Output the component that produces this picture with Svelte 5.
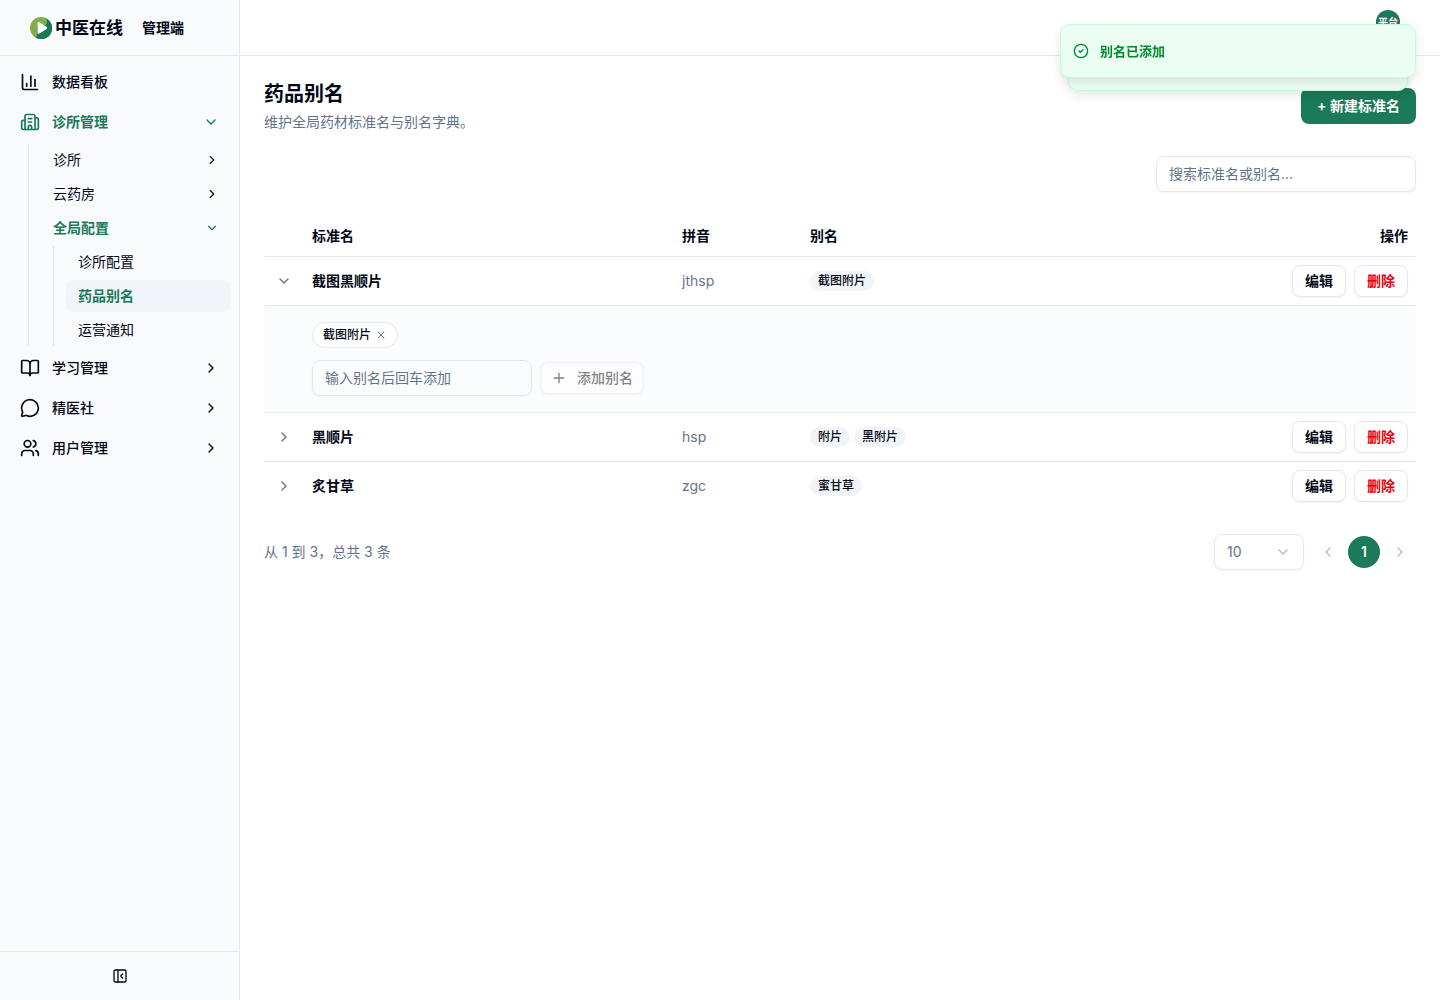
<script lang="ts">
  interface Herb {
    name: string;
    pinyin: string;
    aliases: string[];
  }

  let herbs: Herb[] = [
    { name: "截图黑顺片", pinyin: "jthsp", aliases: ["截图附片"] },
    { name: "黑顺片", pinyin: "hsp", aliases: ["附片", "黑附片"] },
    { name: "炙甘草", pinyin: "zgc", aliases: ["蜜甘草"] },
  ];

  const bottomNav = [
    { label: "学习管理", icon: "book" },
    { label: "精医社", icon: "chat" },
    { label: "用户管理", icon: "users" },
  ];

  const icons: Record<string, string[]> = {
    chart: ["M3 3v16a2 2 0 0 0 2 2h16", "M18 17V9", "M13 17V5", "M8 17v-3"],
    building: [
      "M10 12h4",
      "M10 8h4",
      "M14 21v-3a2 2 0 0 0-4 0v3",
      "M6 10H4a2 2 0 0 0-2 2v7a2 2 0 0 0 2 2h16a2 2 0 0 0 2-2V9a2 2 0 0 0-2-2h-2",
      "M6 21V5a2 2 0 0 1 2-2h8a2 2 0 0 1 2 2v16",
    ],
    book: [
      "M12 7v14",
      "M3 18a1 1 0 0 1-1-1V4a1 1 0 0 1 1-1h5a4 4 0 0 1 4 4 4 4 0 0 1 4-4h5a1 1 0 0 1 1 1v13a1 1 0 0 1-1 1h-6a3 3 0 0 0-3 3 3 3 0 0 0-3-3z",
    ],
    chat: [
      "M2.992 16.342a2 2 0 0 1 .094 1.167l-1.065 3.290a1 1 0 0 0 1.236 1.168l3.413-.998a2 2 0 0 1 1.099.092 10 10 0 1 0-4.777-4.719",
    ],
    users: [
      "M16 21v-2a4 4 0 0 0-4-4H6a4 4 0 0 0-4 4v2",
      "M13 7a4 4 0 1 1-8 0 4 4 0 0 1 8 0",
      "M22 21v-2a4 4 0 0 0-3-3.87",
      "M16 3.13a4 4 0 0 1 0 7.75",
    ],
    right: ["m9 18 6-6-6-6"],
    left: ["m15 18-6-6 6-6"],
    down: ["m6 9 6 6 6-6"],
    plus: ["M5 12h14", "M12 5v14"],
    close: ["M18 6 6 18", "m6 6 12 12"],
    panel: [
      "M5 3h14a2 2 0 0 1 2 2v14a2 2 0 0 1-2 2H5a2 2 0 0 1-2-2V5a2 2 0 0 1 2-2z",
      "M9 3v18",
      "m16 15-3-3 3-3",
    ],
    check: ["M22 12a10 10 0 1 1-20 0 10 10 0 0 1 20 0", "m9 12 2 2 4-4"],
  };

  let expanded = "截图黑顺片";
  let search = "";
  let newAlias = "";
  let pageSize = "10";

  const toggle = (name: string) => {
    expanded = expanded === name ? "" : name;
  };

  const addAlias = (herb: Herb) => {
    const value = newAlias.trim();
    if (!value) return;
    herb.aliases = [...herb.aliases, value];
    herbs = herbs;
    newAlias = "";
  };

  const removeAlias = (herb: Herb, alias: string) => {
    herb.aliases = herb.aliases.filter((a) => a !== alias);
    herbs = herbs;
  };

  $: visible = herbs.filter((h) => h.name.includes(search) || h.aliases.some((a) => a.includes(search)));
</script>

{#snippet icon(name: string, size: number, stroke = 2)}
  <svg
    width={size}
    height={size}
    viewBox="0 0 24 24"
    fill="none"
    stroke="currentColor"
    stroke-width={stroke}
    stroke-linecap="round"
    stroke-linejoin="round"
    aria-hidden="true">
    {#each icons[name] as d}
      <path {d} />
    {/each}
  </svg>
{/snippet}

<div class="app">
  <aside class="sidebar">
    <div class="brand">
      <svg class="logo" width="22" height="22" viewBox="0 0 22 22" aria-hidden="true">
        <circle cx="11" cy="11" r="11" fill="#83ad45" />
        <path d="M16 1.200A11 11 0 1 1 5.500 20.500C7 19.500 7 18 7 16V9l9-1c1-2 1.500-4.500 0-6.800z" fill="#1a7a57" />
        <path d="M7.500 6.200c0-1 .9-1.500 1.800-1l7.200 4.600c.8.5.8 1.600 0 2.100l-5.500 3.500c-1.500 1-2.500 1.300-3.500 1.300z" fill="#fff" />
      </svg>
      <span class="brand-name">中医在线</span>
      <span class="brand-role">管理端</span>
    </div>

    <nav class="nav">
      <button class="nav-item">
        {@render icon("chart", 20)}
        <span>数据看板</span>
      </button>
      <button class="nav-item current" aria-expanded="true">
        {@render icon("building", 20)}
        <span>诊所管理</span>
        {@render icon("down", 16)}
      </button>
      <div class="sub">
        <button class="sub-item"><span>诊所</span>{@render icon("right", 14)}</button>
        <button class="sub-item"><span>云药房</span>{@render icon("right", 14)}</button>
        <button class="sub-item current" aria-expanded="true">
          <span>全局配置</span>{@render icon("down", 14)}
        </button>
        <div class="sub nested">
          <a class="sub-item" href="#clinic">诊所配置</a>
          <a class="sub-item current selected" href="#alias" aria-current="page">药品别名</a>
          <a class="sub-item" href="#notice">运营通知</a>
        </div>
      </div>
      {#each bottomNav as item}
        <button class="nav-item">
          {@render icon(item.icon, 20)}
          <span>{item.label}</span>
          {@render icon("right", 16)}
        </button>
      {/each}
    </nav>

    <div class="sidebar-footer">
      <button class="collapse" aria-label="收起">{@render icon("panel", 16)}</button>
    </div>
  </aside>

  <div class="content">
    <header class="topbar">
      <button class="avatar">平台</button>
    </header>

    <main class="main">
      <div class="page-head">
        <div>
          <h1>药品别名</h1>
          <p>维护全局药材标准名与别名字典。</p>
        </div>
        <button class="primary">+ 新建标准名</button>
      </div>

      <div class="toolbar">
        <input
          class="field search"
          type="text"
          placeholder="搜索标准名或别名..."
          aria-label="搜索标准名或别名"
          bind:value={search} />
      </div>

      <table>
        <thead>
          <tr>
            <th class="col-toggle"></th>
            <th class="col-name">标准名</th>
            <th class="col-pinyin">拼音</th>
            <th>别名</th>
            <th class="col-actions">操作</th>
          </tr>
        </thead>
        <tbody>
          {#each visible as herb}
            <tr>
              <td>
                <button
                  class="toggle"
                  aria-label="展开"
                  aria-expanded={expanded === herb.name}
                  on:click={() => toggle(herb.name)}>
                  {@render icon(expanded === herb.name ? "down" : "right", 16)}
                </button>
              </td>
              <td class="name">{herb.name}</td>
              <td class="pinyin">{herb.pinyin}</td>
              <td>
                <div class="badges">
                  {#each herb.aliases as alias}
                    <span class="badge">{alias}</span>
                  {/each}
                </div>
              </td>
              <td>
                <div class="actions">
                  <button class="outline">编辑</button>
                  <button class="outline danger">删除</button>
                </div>
              </td>
            </tr>
            {#if expanded === herb.name}
              <tr class="detail">
                <td colspan="5">
                  <div class="chips">
                    {#each herb.aliases as alias}
                      <span class="chip">
                        {alias}
                        <button aria-label="移除" on:click={() => removeAlias(herb, alias)}>
                          {@render icon("close", 12)}
                        </button>
                      </span>
                    {/each}
                  </div>
                  <form class="add-form" on:submit|preventDefault={() => addAlias(herb)}>
                    <input
                      class="field alias"
                      type="text"
                      placeholder="输入别名后回车添加"
                      aria-label="输入别名"
                      bind:value={newAlias} />
                    <button class="outline add" disabled={!newAlias.trim()}>
                      {@render icon("plus", 16)}
                      添加别名
                    </button>
                  </form>
                </td>
              </tr>
            {/if}
          {/each}
        </tbody>
      </table>

      <div class="pagination">
        <span class="summary">从 1 到 3，总共 3 条</span>
        <div class="pager">
          <div class="select">
            <select class="field" aria-label="每页条数" bind:value={pageSize}>
              <option>10</option>
              <option>20</option>
              <option>50</option>
            </select>
            {@render icon("down", 16)}
          </div>
          <div class="pages">
            <button class="page" disabled aria-label="上一页">{@render icon("left", 16)}</button>
            <button class="page active" aria-current="page">1</button>
            <button class="page" disabled aria-label="下一页">{@render icon("right", 16)}</button>
          </div>
        </div>
      </div>
    </main>
  </div>

  <div class="toaster" role="status">
    <div class="toast behind"></div>
    <div class="toast">
      {@render icon("check", 16)}
      <span>别名已添加</span>
    </div>
  </div>
</div>

<style>
  :global(body) {
    margin: 0;
    background: #fff;
  }

  .app {
    --primary: #1b7a59;
    --text: #020817;
    --muted: #64748b;
    --border: #e2e8f0;
    display: flex;
    min-height: 100vh;
    font-family: Inter, "Noto Sans CJK SC", sans-serif;
    font-size: 14px;
    line-height: 20px;
    color: var(--text);
  }

  .app :global(*) {
    box-sizing: border-box;
  }

  button,
  input,
  select {
    font: inherit;
    color: inherit;
  }

  button {
    display: flex;
    align-items: center;
    padding: 0;
    border: 0;
    background: none;
    white-space: nowrap;
    cursor: pointer;
  }

  svg {
    flex-shrink: 0;
  }

  .sidebar {
    display: flex;
    flex-direction: column;
    flex-shrink: 0;
    width: 240px;
    background: #f8fafc;
    border-right: 1px solid var(--border);
  }

  .brand {
    display: flex;
    align-items: center;
    height: 56px;
    padding-left: 30px;
    border-bottom: 1px solid var(--border);
    font-weight: 600;
  }

  .brand-name {
    margin: 0 19px 0 3px;
    font-size: 17px;
  }

  .nav {
    display: flex;
    flex-direction: column;
    flex: 1;
    gap: 4px;
    padding: 8px;
  }

  .nav-item {
    gap: 12px;
    height: 36px;
    padding: 0 12px;
    border-radius: 8px;
    text-align: left;
    font-weight: 500;
  }

  .nav-item span,
  .sub-item span {
    flex: 1;
  }

  .sub {
    display: flex;
    flex-direction: column;
    gap: 2px;
    margin-left: 20px;
    padding-left: 12px;
    border-left: 1px solid var(--border);
  }

  .nested {
    margin-left: 12px;
  }

  .sub-item {
    display: flex;
    align-items: center;
    height: 32px;
    padding: 0 12px;
    border-radius: 8px;
    text-align: left;
    text-decoration: none;
    color: var(--text);
  }

  .current {
    color: var(--primary);
    font-weight: 600;
  }

  .selected {
    background: #f1f5f9;
  }

  .sidebar-footer {
    display: flex;
    justify-content: center;
    height: 49px;
    border-top: 1px solid var(--border);
  }

  .content {
    flex: 1;
    min-width: 0;
  }

  .topbar {
    display: flex;
    justify-content: flex-end;
    align-items: flex-start;
    height: 56px;
    padding: 10px 40px 0;
    border-bottom: 1px solid var(--border);
  }

  .avatar {
    justify-content: center;
    width: 24px;
    height: 24px;
    border-radius: 50%;
    background: var(--primary);
    color: #fff;
    font-size: 10px;
    font-weight: 600;
  }

  .main {
    display: flex;
    flex-direction: column;
    gap: 24px;
    padding: 24px;
  }

  .page-head {
    display: flex;
    justify-content: space-between;
    align-items: center;
  }

  h1 {
    margin: 0 0 4px;
    font-size: 20px;
    line-height: 28px;
    font-weight: 600;
  }

  p {
    margin: 0;
    color: var(--muted);
  }

  .primary {
    height: 36px;
    padding: 0 16px;
    border-radius: 8px;
    background: var(--primary);
    color: #fff;
    font-weight: 600;
  }

  .toolbar {
    display: flex;
    justify-content: flex-end;
  }

  .field {
    height: 36px;
    padding: 0 12px 2px;
    border: 1px solid var(--border);
    border-radius: 8px;
    background: transparent;
    box-shadow: 0 1px 2px rgba(0, 0, 0, 0.05);
  }

  .field::placeholder {
    color: var(--muted);
    opacity: 1;
  }

  .search {
    width: 260px;
  }

  table {
    width: 100%;
    border-collapse: separate;
    border-spacing: 0;
    table-layout: fixed;
  }

  th {
    height: 41px;
    padding: 0 8px;
    border-bottom: 1px solid var(--border);
    text-align: left;
    font-weight: 600;
  }

  td {
    padding: 8px;
    border-bottom: 1px solid var(--border);
  }

  tbody tr:last-child td {
    border-bottom: 0;
  }

  .col-toggle {
    width: 40px;
  }

  .col-name {
    width: 370px;
  }

  .col-pinyin {
    width: 128px;
  }

  .col-actions {
    width: 160px;
    text-align: right;
  }

  .toggle {
    justify-content: center;
    width: 24px;
    height: 24px;
    color: var(--muted);
  }

  .name {
    font-weight: 600;
  }

  .pinyin {
    color: var(--muted);
  }

  .badges,
  .chips {
    display: flex;
    flex-wrap: wrap;
    gap: 4px;
  }

  .badge {
    padding: 2px 8px;
    border-radius: 10px;
    background: #f1f5f9;
    font-size: 12px;
    line-height: 16px;
    font-weight: 500;
  }

  .actions {
    display: flex;
    justify-content: flex-end;
    gap: 8px;
  }

  .outline {
    height: 32px;
    padding: 0 12px;
    border: 1px solid var(--border);
    border-radius: 8px;
    background: #fff;
    box-shadow: 0 1px 2px rgba(0, 0, 0, 0.05);
    font-weight: 600;
  }

  .danger {
    color: #e7000b;
  }

  .detail td {
    padding: 16px 48px;
    background: #fbfcfd;
  }

  .chip {
    display: flex;
    align-items: center;
    gap: 4px;
    height: 26px;
    padding: 0 10px;
    border: 1px solid var(--border);
    border-radius: 13px;
    background: #fff;
    font-size: 12px;
    font-weight: 500;
  }

  .chip button {
    color: var(--muted);
  }

  .add-form {
    display: flex;
    align-items: center;
    gap: 8px;
    margin-top: 12px;
  }

  .alias {
    width: 220px;
  }

  .add {
    gap: 10px;
    padding: 0 10px;
    font-weight: 500;
  }

  .add:disabled {
    opacity: 0.5;
  }

  .pagination,
  .pager,
  .pages {
    display: flex;
    align-items: center;
  }

  .pagination {
    justify-content: space-between;
    color: var(--muted);
  }

  .pager {
    gap: 8px;
  }

  .pages {
    gap: 4px;
  }

  .select {
    display: grid;
    align-items: center;
    width: 90px;
  }

  .select > :global(*) {
    grid-area: 1 / 1;
  }

  .select select {
    appearance: none;
    width: 100%;
    padding-bottom: 0;
  }

  .select svg {
    justify-self: end;
    margin-right: 13px;
    opacity: 0.5;
    pointer-events: none;
  }

  .page {
    justify-content: center;
    width: 32px;
    height: 32px;
    border-radius: 50%;
  }

  .page:disabled {
    opacity: 0.5;
  }

  .page.active {
    background: var(--primary);
    color: #fff;
    font-weight: 600;
  }

  /* the newest toast lies over the older one */
  .toaster {
    position: fixed;
    top: 24px;
    right: 24px;
    width: 356px;
  }

  .toast {
    position: relative;
    display: flex;
    align-items: center;
    gap: 11px;
    height: 54px;
    padding: 0 12px;
    border: 1px solid #bffcd9;
    border-radius: 10px;
    background: #ecfdf3;
    box-shadow: 0 4px 12px rgba(0, 0, 0, 0.1);
    color: #008a2e;
    font-size: 13px;
    font-weight: 600;
  }

  .behind {
    position: absolute;
    top: 13px;
    left: 8px;
    right: 8px;
  }
</style>
